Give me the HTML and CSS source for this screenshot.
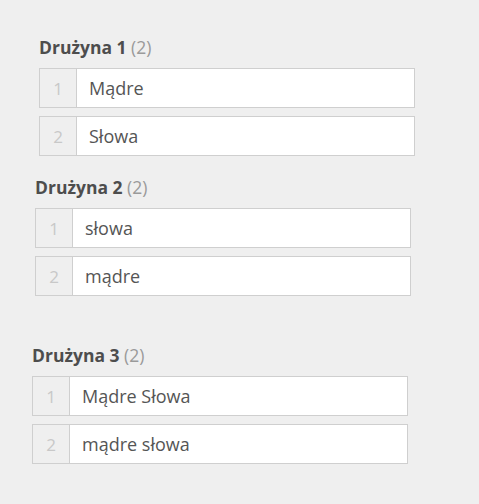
FILE: index.html
```html
<!DOCTYPE html>
<html lang="pl">
<head>
<meta charset="utf-8">
<link rel="stylesheet" href="styles.css">
</head>
<body>
<div class="page">
  <section class="team team-1">
    <h3 class="team-title">Drużyna 1 <span class="count">(2)</span></h3>
    <ol class="list">
      <li class="row"><span class="num">1</span><span class="word">Mądre</span></li>
      <li class="row"><span class="num">2</span><span class="word">Słowa</span></li>
    </ol>
  </section>
  <section class="team team-2">
    <h3 class="team-title">Drużyna 2 <span class="count">(2)</span></h3>
    <ol class="list">
      <li class="row"><span class="num">1</span><span class="word">słowa</span></li>
      <li class="row"><span class="num">2</span><span class="word">mądre</span></li>
    </ol>
  </section>
  <section class="team team-3">
    <h3 class="team-title">Drużyna 3 <span class="count">(2)</span></h3>
    <ol class="list">
      <li class="row"><span class="num">1</span><span class="word">Mądre Słowa</span></li>
      <li class="row"><span class="num">2</span><span class="word">mądre słowa</span></li>
    </ol>
  </section>
</div>
</body>
</html>
```
FILE: styles.css
```css
* { box-sizing: border-box; }
html, body {
  margin: 0;
  padding: 0;
  background: #efefef;
  font-family: "Open Sans", "Liberation Sans", sans-serif;
}
.page {
  padding-top: 36px;
}
.team {
  width: 376px;
}
.team-1 { margin-left: 39px; }
.team-2 { margin-left: 35px; margin-top: 20px; }
.team-3 { margin-left: 32px; margin-top: 48px; }
.team-title {
  margin: 0;
  font-size: 17.5px;
  line-height: 22px;
  font-weight: 700;
  color: #4d4d4d;
}
.count {
  font-weight: 400;
  color: #9a9a9a;
}
.list {
  list-style: none;
  margin: 10px 0 0;
  padding: 0;
  display: flex;
  flex-direction: column;
  gap: 8px;
}
.row {
  display: flex;
  height: 40px;
  border: 1px solid #cfcfcf;
  background: #fff;
}
.num {
  width: 37px;
  flex: none;
  background: #efefef;
  border-right: 1px solid #cfcfcf;
  color: #c8c8c8;
  font-size: 17px;
  display: flex;
  align-items: center;
  justify-content: center;
}
.word {
  display: flex;
  align-items: center;
  padding-left: 12px;
  font-size: 18px;
  color: #555;
}
```
